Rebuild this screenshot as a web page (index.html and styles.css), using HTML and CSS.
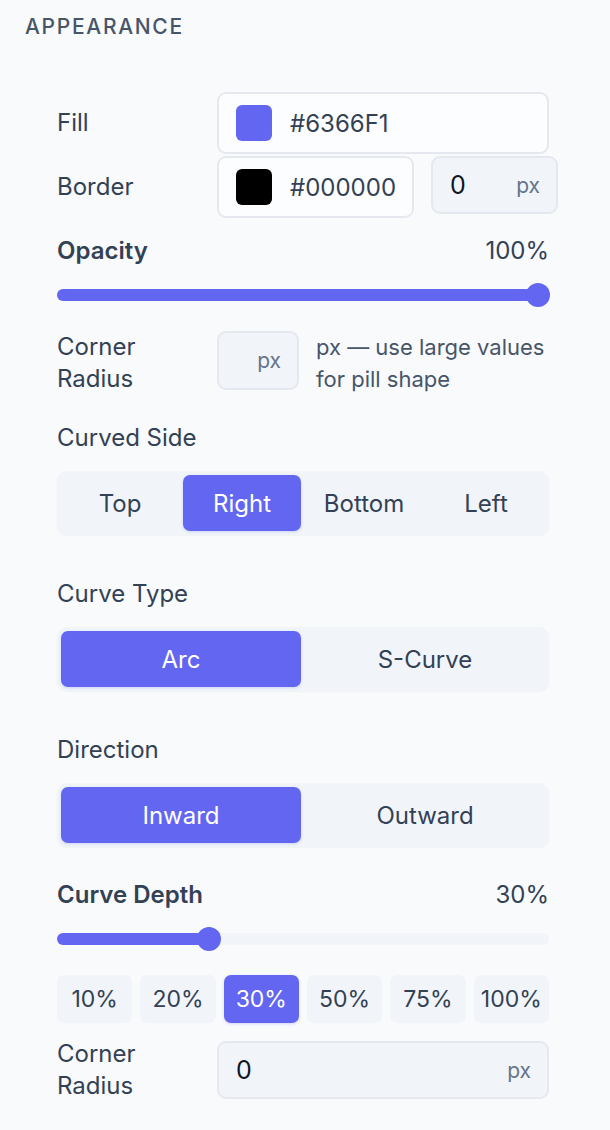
FILE: index.html
```html
<!DOCTYPE html>
<html lang="en">
<head>
  <meta charset="UTF-8" />
  <meta name="viewport" content="width=device-width, initial-scale=1.0"/>
  <title>Appearance</title>
  <link rel="stylesheet" href="styles.css">
</head>
<body>
  <div class="painel">
    <h3 class="titulo">Appearance</h3>

    <div class="campos">
      <div class="linha linha-fill">
        <label>Fill</label>
        <div class="cor larga">
          <span class="amostra" style="background:#6366F1"></span>
          <span class="hex">#6366F1</span>
        </div>
      </div>

      <div class="linha linha-borda">
        <label>Border</label>
        <div class="cor">
          <span class="amostra" style="background:#000000"></span>
          <span class="hex">#000000</span>
        </div>
        <div class="numero curto">
          <span class="valor">0</span>
          <span class="unidade">px</span>
        </div>
      </div>

      <div class="cabeca-slider sec-opacidade">
        <span class="forte">Opacity</span>
        <span>100%</span>
      </div>
      <div class="trilho"><div class="preenchido" style="width:100%"></div><span class="bolinha fim" style="left:100%"></span></div>

      <div class="linha linha-raio">
        <label>Corner Radius</label>
        <div class="numero mini">
          <span class="unidade">px</span>
        </div>
        <p class="dica">px — use large values for pill shape</p>
      </div>

      <p class="rotulo sec-lado">Curved Side</p>
      <div class="segmentos">
        <button>Top</button>
        <button class="ativo">Right</button>
        <button>Bottom</button>
        <button>Left</button>
      </div>

      <p class="rotulo sec-curva">Curve Type</p>
      <div class="segmentos">
        <button class="ativo">Arc</button>
        <button>S-Curve</button>
      </div>

      <p class="rotulo sec-curva">Direction</p>
      <div class="segmentos">
        <button class="ativo">Inward</button>
        <button>Outward</button>
      </div>

      <div class="cabeca-slider sec-profundidade">
        <span class="forte">Curve Depth</span>
        <span>30%</span>
      </div>
      <div class="trilho"><div class="preenchido" style="width:30.9%"></div><span class="bolinha" style="left:30.9%"></span></div>

      <div class="atalhos">
        <button>10%</button>
        <button>20%</button>
        <button class="ativo">30%</button>
        <button>50%</button>
        <button>75%</button>
        <button>100%</button>
      </div>

      <div class="linha linha-raio2">
        <label>Corner Radius</label>
        <div class="numero larga">
          <span class="valor">0</span>
          <span class="unidade">px</span>
        </div>
      </div>
    </div>
  </div>
</body>
</html>
```

FILE: styles.css
```css
* {
  margin: 0; padding: 0; box-sizing: border-box;
  font-family: Inter, "Noto Sans", sans-serif;
}
body {
  background: #f8fafc;
  color: #334155;
  font-size: 24px;
}
.painel {
  padding: 13px 0 30px 25px;
}
.titulo {
  font-size: 21px;
  line-height: 28px;
  font-weight: 500;
  letter-spacing: 1.7px;
  text-transform: uppercase;
  color: #475569;
}
.campos {
  margin-left: 32px;
  width: 492px;
}

/* linhas com rotulo + campo */
.linha {
  display: flex;
  align-items: center;
}
.linha label {
  width: 160px;
  flex-shrink: 0;
  line-height: 32px;
  padding-right: 16px;
}
.linha-fill { margin-top: 51px; }
.linha-borda { margin-top: 2px; align-items: flex-start; }
.linha-borda label { margin-top: 15px; }

.cor {
  display: flex;
  align-items: center;
  gap: 18px;
  height: 62px;
  width: 197px;
  flex-shrink: 0;
  padding: 0 17px;
  background: #fcfdfe;
  border: 2px solid #e5e9ef;
  border-radius: 9px;
  color: #334155;
}
.cor.larga { width: 332px; }
.amostra {
  width: 36px;
  height: 36px;
  border-radius: 6px;
  flex-shrink: 0;
}
.numero {
  display: flex;
  align-items: center;
  justify-content: space-between;
  background: #f1f5f9;
  border: 2px solid #e5e9ef;
  border-radius: 9px;
  padding: 0 16px 0 17px;
}
.numero .valor { color: #0f172a; font-size: 25px; }
.numero .unidade { color: #64748b; font-size: 21px; margin-left: auto; }
.numero.curto {
  width: 127px;
  height: 58px;
  margin-left: 17px;
  flex-shrink: 0;
}
.numero.mini {
  width: 82px;
  height: 59px;
  flex-shrink: 0;
}
.numero.larga {
  width: 332px;
  height: 58px;
}

/* sliders */
.cabeca-slider {
  display: flex;
  justify-content: space-between;
  line-height: 28px;
}
.forte { font-weight: 570; }
.sec-opacidade { margin-top: 19px; }
.sec-profundidade { margin-top: 34px; }
.trilho {
  position: relative;
  height: 12px;
  margin-top: 24px;
  border-radius: 6px;
  background: #f1f5f9;
}
.preenchido {
  height: 100%;
  border-radius: 6px;
  background: #6366f1;
}
.bolinha {
  position: absolute;
  top: 50%;
  width: 24px;
  height: 24px;
  margin: -12px 0 0 -12px;
  border-radius: 50%;
  background: #6366f1;
}
.bolinha.fim { margin-left: -23px; }

.linha-raio { margin-top: 30px; align-items: flex-start; }
.dica {
  margin-left: 17px;
  line-height: 32px;
  font-size: 22px;
  color: #475569;
}

/* botoes segmentados */
.rotulo { line-height: 28px; }
.sec-lado { margin-top: 29px; }
.sec-curva { margin-top: 45px; }
.segmentos {
  display: flex;
  gap: 4px;
  margin-top: 19px;
  padding: 4px;
  height: 64px;
  background: #f1f5f9;
  border-radius: 10px;
  box-shadow: 0 1px 2px rgba(15, 23, 42, 0.04);
}
.segmentos button,
.atalhos button {
  flex: 1;
  border: none;
  background: transparent;
  color: #334155;
  font-size: 24px;
  border-radius: 7px;
  cursor: pointer;
}
.segmentos button.ativo,
.atalhos button.ativo {
  background: #6366f1;
  color: #fff;
  box-shadow: 0 1px 3px rgba(99, 102, 241, 0.25);
}

.atalhos {
  display: flex;
  gap: 8px;
  margin-top: 30px;
  height: 48px;
}
.atalhos button { background: #f1f5f9; font-size: 23px; }

.linha-raio2 { margin-top: 15px; }
.linha-raio2 label { align-self: flex-start; }
```
